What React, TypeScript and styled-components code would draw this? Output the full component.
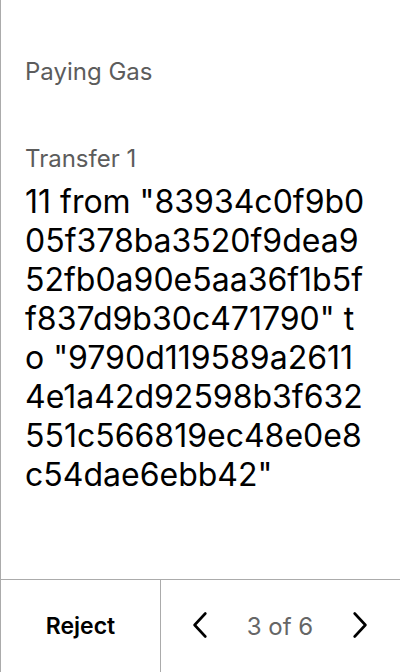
import React from "react";
import styled, { createGlobalStyle } from "styled-components";

const Global = createGlobalStyle`
  html, body { margin: 0; padding: 0; background: #fff; }
  body { font-family: Inter, "Noto Sans", sans-serif; }
`;

const Screen = styled.div`
  width: 400px;
  height: 672px;
  box-sizing: border-box;
  border-left: 1px solid #ababab;
  display: flex;
  flex-direction: column;
  background: #fff;
`;

const Body = styled.div`
  flex: 1;
  padding: 57px 24px 0 24px;
  display: flex;
  flex-direction: column;
`;

const Label = styled.div<{ $gap?: number }>`
  font-size: 24px;
  line-height: 30px;
  color: #5c5c5c;
  margin-bottom: ${(p) => p.$gap ?? 0}px;
`;

const Value = styled.div`
  font-size: 32px;
  line-height: 39px;
  color: #000;
  margin-top: 8px;
`;

const ValueLine = styled.span`
  display: block;
  white-space: pre;
`;

const Footer = styled.div`
  height: 92px;
  border-top: 1px solid #ababab;
  display: flex;
`;

const RejectButton = styled.button`
  width: 160px;
  border: none;
  border-right: 1px solid #ababab;
  background: none;
  font-family: inherit;
  font-size: 23px;
  font-weight: 600;
  color: #000;
  padding: 0;
`;

const Pager = styled.div`
  flex: 1;
  display: flex;
  align-items: center;
  justify-content: space-between;
  padding: 0 33px 0 32px;
`;

const Arrow = styled.button`
  border: none;
  background: none;
  padding: 0;
  width: 14px;
  height: 26px;
  margin-bottom: 3px;
  display: flex;
  align-items: center;
  justify-content: center;
`;

const Count = styled.span`
  font-size: 24px;
  color: #666;
`;

const Chevron = ({ dir }: { dir: "l" | "r" }) => (
  <svg width="14" height="26" viewBox="0 0 14 26" fill="none">
    <path
      d={dir === "l" ? "M12.3 1.5 L1.6 13 L12.3 24.5" : "M1.7 1.5 L12.4 13 L1.7 24.5"}
      stroke="#000"
      strokeWidth="2.6"
      strokeLinecap="round"
      strokeLinejoin="round"
    />
  </svg>
);

const valueLines = [
  '11 from "83934c0f9b0',
  "05f378ba3520f9dea9",
  "52fb0a90e5aa36f1b5f",
  'f837d9b30c471790" t',
  'o "9790d119589a2611',
  "4e1a42d92598b3f632",
  "551c566819ec48e0e8",
  'c54dae6ebb42"',
];

export default function App() {
  return (
    <>
      <Global />
      <Screen>
        <Body>
          <Label $gap={57}>Paying Gas</Label>
          <Label>Transfer 1</Label>
          <Value>
            {valueLines.map((line, i) => (
              <ValueLine key={i}>{line}</ValueLine>
            ))}
          </Value>
        </Body>
        <Footer>
          <RejectButton>Reject</RejectButton>
          <Pager>
            <Arrow>
              <Chevron dir="l" />
            </Arrow>
            <Count>3 of 6</Count>
            <Arrow>
              <Chevron dir="r" />
            </Arrow>
          </Pager>
        </Footer>
      </Screen>
    </>
  );
}
